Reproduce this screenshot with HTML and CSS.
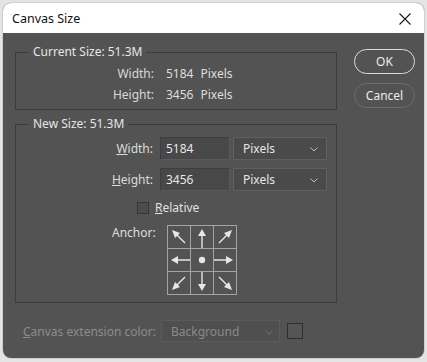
FILE: index.html
```html
<!DOCTYPE html>
<html>
<head>
<meta charset="utf-8">
<link rel="stylesheet" href="styles.css">
</head>
<body>
<div class="window">
  <div class="titlebar">
    <span class="title">Canvas Size</span>
    <svg class="close" width="12" height="12" viewBox="0 0 12 12"><path d="M0.5 0.5 L11.5 11.5 M11.5 0.5 L0.5 11.5" stroke="#1a1a1a" stroke-width="1.1" fill="none"/></svg>
  </div>
  <div class="content">
    <div class="main">
      <fieldset class="group current">
        <legend>Current Size: 51.3M</legend>
        <div class="info-row"><span class="lbl">Width:</span><span class="val">5184<span class="unit">Pixels</span></span></div>
        <div class="info-row"><span class="lbl">Height:</span><span class="val">3456<span class="unit">Pixels</span></span></div>
      </fieldset>
      <fieldset class="group newsize">
        <legend>New Size: 51.3M</legend>
        <div class="field-row">
          <span class="flbl"><u>W</u>idth:</span>
          <span class="input">5184</span>
          <span class="select">Pixels<svg class="chev" width="8" height="5" viewBox="0 0 8 5"><path d="M0.5 0.5 L4 4 L7.5 0.5" stroke="#bdbdbd" fill="none" stroke-width="1"/></svg></span>
        </div>
        <div class="field-row">
          <span class="flbl"><u>H</u>eight:</span>
          <span class="input">3456</span>
          <span class="select">Pixels<svg class="chev" width="8" height="5" viewBox="0 0 8 5"><path d="M0.5 0.5 L4 4 L7.5 0.5" stroke="#bdbdbd" fill="none" stroke-width="1"/></svg></span>
        </div>
        <div class="check-row">
          <span class="checkbox"></span>
          <span class="clbl"><u>R</u>elative</span>
        </div>
        <div class="anchor-row">
          <span class="albl">Anchor:</span>
          <svg class="anchor" width="70" height="70" viewBox="0 0 70 70">
            <g stroke="#a3a3a3" stroke-width="1" fill="none">
              <rect x="0.5" y="0.5" width="69" height="69"/>
              <line x1="23.5" y1="0" x2="23.5" y2="70"/>
              <line x1="46.5" y1="0" x2="46.5" y2="70"/>
              <line x1="0" y1="23.5" x2="70" y2="23.5"/>
              <line x1="0" y1="46.5" x2="70" y2="46.5"/>
            </g>
            <g stroke="#e6e6e6" stroke-width="1.4" fill="#e6e6e6">
              <line x1="35" y1="23" x2="35" y2="10"/>
              <polygon points="35,4 31,11 39,11" stroke="none"/>
              <line x1="35" y1="47" x2="35" y2="60"/>
              <polygon points="35,66 31,59 39,59" stroke="none"/>
              <line x1="23" y1="35" x2="10" y2="35"/>
              <polygon points="4,35 11,31 11,39" stroke="none"/>
              <line x1="47" y1="35" x2="60" y2="35"/>
              <polygon points="66,35 59,31 59,39" stroke="none"/>
              <line x1="18" y1="18" x2="9" y2="9"/>
              <polygon points="5,5 13,8 8,13" stroke="none"/>
              <line x1="52" y1="18" x2="61" y2="9"/>
              <polygon points="65,5 57,8 62,13" stroke="none"/>
              <line x1="18" y1="52" x2="9" y2="61"/>
              <polygon points="5,65 13,62 8,57" stroke="none"/>
              <line x1="52" y1="52" x2="61" y2="61"/>
              <polygon points="65,65 57,62 62,57" stroke="none"/>
              <circle cx="35" cy="35" r="3.2" stroke="none"/>
            </g>
          </svg>
        </div>
      </fieldset>
      <div class="ext-row">
        <span class="elbl"><u>C</u>anvas extension color:</span>
        <span class="eselect">Background<svg class="chev" width="8" height="5" viewBox="0 0 8 5"><path d="M0.5 0.5 L4 4 L7.5 0.5" stroke="#6f6f6f" fill="none" stroke-width="1"/></svg></span>
        <span class="swatch"></span>
      </div>
    </div>
    <div class="buttons">
      <button class="btn ok">OK</button>
      <button class="btn cancel">Cancel</button>
    </div>
  </div>
</div>
</body>
</html>
```
FILE: styles.css
```css
* { box-sizing: border-box; }
html, body { margin: 0; padding: 0; }
body {
  background: #e4e4e4;
  font-family: "Noto Sans", "Open Sans", sans-serif;
  font-size: 12px;
  width: 427px;
  height: 362px;
  overflow: hidden;
}
.window {
  margin: 3px 0 0 3px;
  width: 421px;
  height: 355px;
  border-radius: 8px;
  overflow: hidden;
  background: #535353;
  box-shadow: 0 0 0 1px #cfcfcf;
}
.titlebar {
  height: 30px;
  background: #ffffff;
  display: flex;
  align-items: center;
  justify-content: space-between;
  padding: 0 9px 0 9px;
}
.title {
  color: #111;
  font-size: 12.5px;
  line-height: 16px;
  padding-top: 1px;
}
.close { margin-right: 4px; margin-top: 1px; }
.content {
  display: flex;
  height: 325px;
  color: #e2e2e2;
}
.main {
  margin-left: 12px;
  width: 322px;
  display: flex;
  flex-direction: column;
}
.group {
  margin: 0;
  padding: 0;
  border: 1px solid #3d3d3d;
  min-width: 0;
}
.group legend {
  margin-left: 13px;
  padding: 0 4px;
  line-height: 16px;
  color: #e6e6e6;
}
.current {
  margin-top: 11px;
  padding: 3px 0 4px 0;
}
.info-row {
  display: flex;
  height: 21px;
  align-items: center;
}
.info-row .lbl {
  width: 138px;
  text-align: right;
  color: #d8d8d8;
}
.info-row .val {
  margin-left: 12px;
  color: #dedede;
}
.unit { margin-left: 7px; }
.newsize {
  margin-top: 6px;
  padding: 5px 0 7px 0;
}
.field-row {
  display: flex;
  align-items: center;
  height: 23px;
  margin-bottom: 8px;
}
.flbl {
  width: 137px;
  text-align: right;
  color: #dcdcdc;
}
.input {
  margin-left: 7px;
  width: 70px;
  height: 23px;
  background: #484848;
  border: 1px solid #3e3e3e;
  border-bottom-color: #5a5a5a;
  border-right-color: #5a5a5a;
  padding-left: 5px;
  line-height: 21px;
  color: #e6e6e6;
}
.select {
  margin-left: 3px;
  width: 94px;
  height: 23px;
  background: #4a4a4a;
  border: 1px solid #5f5f5f;
  display: flex;
  align-items: center;
  justify-content: space-between;
  padding: 0 8px 0 9px;
  color: #e6e6e6;
}
.chev { margin-top: 2px; }
.check-row {
  display: flex;
  align-items: center;
  height: 17px;
  padding-left: 121px;
}
.checkbox {
  width: 12px;
  height: 12px;
  border: 1px solid #363636;
  background: #4c4c4c;
}
.clbl {
  margin-left: 6px;
  color: #e2e2e2;
}
.anchor-row {
  display: flex;
  align-items: flex-start;
  margin-top: 9px;
  padding-left: 96px;
}
.albl {
  line-height: 16px;
  color: #dedede;
}
.anchor {
  display: block;
  margin-left: 11px;
}
.ext-row {
  display: flex;
  align-items: center;
  margin-top: 17px;
  padding-left: 8px;
  color: #8d8d8d;
}
.elbl { width: 138px; }
.eselect {
  width: 119px;
  height: 22px;
  border: 1px solid #5b5b5b;
  background: #4f4f4f;
  display: flex;
  align-items: center;
  justify-content: space-between;
  padding: 0 6px 0 9px;
  color: #8a8a8a;
}
.swatch {
  margin-left: 7px;
  width: 16px;
  height: 16px;
  border: 1px solid #2f2f2f;
  background: #555;
}
.buttons {
  margin-left: 17px;
  margin-top: 16px;
  display: flex;
  flex-direction: column;
  gap: 9px;
}
.btn {
  width: 61px;
  height: 25px;
  border-radius: 13px;
  background: #535353;
  color: #ececec;
  font-family: inherit;
  font-size: 12px;
  padding: 0;
  line-height: 16px;
}
.ok { border: 1.5px solid #d9d9d9; }
.cancel { border: 1.5px solid #6c6c6c; }
```
